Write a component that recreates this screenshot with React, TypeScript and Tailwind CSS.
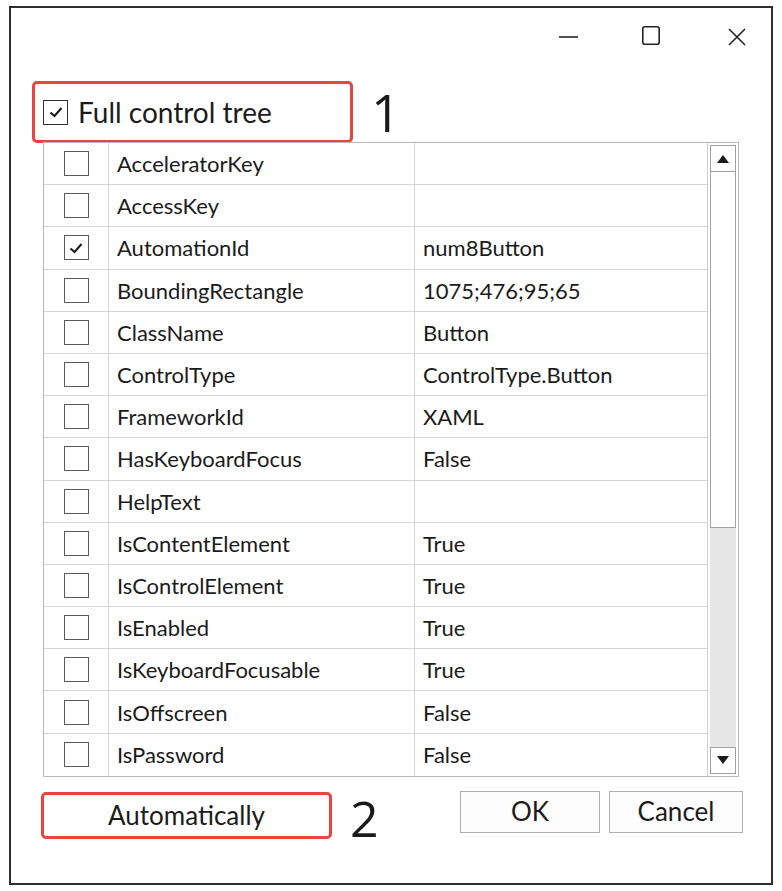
import React from "react";

const rows: { name: string; value: string; checked?: boolean }[] = [
  { name: "AcceleratorKey", value: "" },
  { name: "AccessKey", value: "" },
  { name: "AutomationId", value: "num8Button", checked: true },
  { name: "BoundingRectangle", value: "1075;476;95;65" },
  { name: "ClassName", value: "Button" },
  { name: "ControlType", value: "ControlType.Button" },
  { name: "FrameworkId", value: "XAML" },
  { name: "HasKeyboardFocus", value: "False" },
  { name: "HelpText", value: "" },
  { name: "IsContentElement", value: "True" },
  { name: "IsControlElement", value: "True" },
  { name: "IsEnabled", value: "True" },
  { name: "IsKeyboardFocusable", value: "True" },
  { name: "IsOffscreen", value: "False" },
  { name: "IsPassword", value: "False" },
];

function Check({ checked, dark }: { checked?: boolean; dark?: boolean }) {
  return (
    <div
      className={
        "w-[25px] h-[25px] border-[1.5px] bg-white flex items-center justify-center " +
        (dark ? "border-[#333333]" : "border-[#5a5a5a]")
      }
    >
      {checked && (
        <svg width="16" height="14" viewBox="0 0 16 14">
          <path d="M2.5 7.5 L6.5 11 L13.5 3" fill="none" stroke="#1a1a1a" strokeWidth="2" />
        </svg>
      )}
    </div>
  );
}

export default function App() {
  const font = { fontFamily: "Lato, 'Open Sans', sans-serif" };
  const digitFont = { fontFamily: "'Open Sans', 'Noto Sans', sans-serif" };
  return (
    <div className="w-[782px] h-[891px] bg-white pt-[6px] pl-[9px]" style={font}>
      <div className="w-[764px] h-[879px] border-2 border-[#2e2e2e] bg-white flex flex-col text-[#1b1b1b]">
        {/* title bar */}
        <div className="h-[73px] flex justify-end items-start pt-[18px] pr-[25px]">
          <svg width="19" height="19" viewBox="0 0 19 19" className="mr-[64px]">
            <line x1="0" y1="11" x2="19" y2="11" stroke="#222" strokeWidth="1.6" />
          </svg>
          <svg width="18" height="19" viewBox="0 0 18 19" className="mr-[68px]">
            <rect x="0.8" y="0.8" width="16.4" height="17.4" rx="2" fill="none" stroke="#222" strokeWidth="1.6" />
          </svg>
          <svg width="18" height="19" viewBox="0 0 18 19" className="mt-[2px]">
            <path d="M1 1 L17 17 M17 1 L1 17" stroke="#222" strokeWidth="1.6" fill="none" />
          </svg>
        </div>

        {/* header */}
        <div className="flex items-center">
          <div className="ml-[21px] w-[321px] h-[62px] border-[3px] border-[#e8453c] rounded-[5px] flex items-center pl-[8px]">
            <Check checked dark />
            <span className="ml-[10px] text-[28px] leading-none">Full control tree</span>
          </div>
          <span className="ml-[18px] text-[52px] leading-none font-normal" style={digitFont}>
            1
          </span>
        </div>

        {/* table */}
        <div className="ml-[32px] mt-[-1px] w-[696px] border border-[#b8b8b8] flex">
          <div className="w-[663px] flex flex-col">
            {rows.map((r, i) => (
              <div
                key={r.name}
                className={
                  "h-[42.2px] flex text-[22px] " + (i < rows.length - 1 ? "border-b border-[#d4d4d4]" : "")
                }
              >
                <div className="w-[65px] border-r border-[#d4d4d4] flex items-center justify-center">
                  <Check checked={r.checked} />
                </div>
                <div className="w-[306px] border-r border-[#d4d4d4] flex items-center pl-[8px]">{r.name}</div>
                <div className="flex-1 flex items-center pl-[8px]">{r.value}</div>
              </div>
            ))}
          </div>
          <div className="flex-1 flex flex-col pl-[2px] pr-[2px] pt-[2px] pb-[2px] border-l border-[#d0d0d0]">
            <div className="h-[27px] border border-[#a0a0a0] bg-white flex items-center justify-center">
              <svg width="12" height="8" viewBox="0 0 12 8">
                <path d="M6 0 L12 8 L0 8 Z" fill="#1a1a1a" />
              </svg>
            </div>
            <div className="h-[356px] border border-[#a0a0a0] border-t-0 bg-white" />
            <div className="flex-1 bg-[#e6e6e6]" />
            <div className="h-[27px] border border-[#a0a0a0] bg-white flex items-center justify-center">
              <svg width="12" height="8" viewBox="0 0 12 8">
                <path d="M0 0 L12 0 L6 8 Z" fill="#1a1a1a" />
              </svg>
            </div>
          </div>
        </div>

        {/* bottom */}
        <div className="flex items-start mt-[15px]">
          <div className="ml-[30px] w-[291px] h-[47px] border-[3px] border-[#e8453c] rounded-[5px] flex items-center justify-center text-[26px]">
            Automatically
          </div>
          <span className="ml-[18px] mt-[1px] text-[50px] leading-none font-normal" style={digitFont}>
            2
          </span>
          <div className="ml-auto mr-[28px] flex gap-[9px] mt-[-1px]">
            <div className="w-[140px] h-[42px] border border-[#adadad] bg-[#fdfdfd] flex items-center justify-center text-[26px]">
              OK
            </div>
            <div className="w-[134px] h-[42px] border border-[#adadad] bg-[#fdfdfd] flex items-center justify-center text-[26px]">
              Cancel
            </div>
          </div>
        </div>
      </div>
    </div>
  );
}
